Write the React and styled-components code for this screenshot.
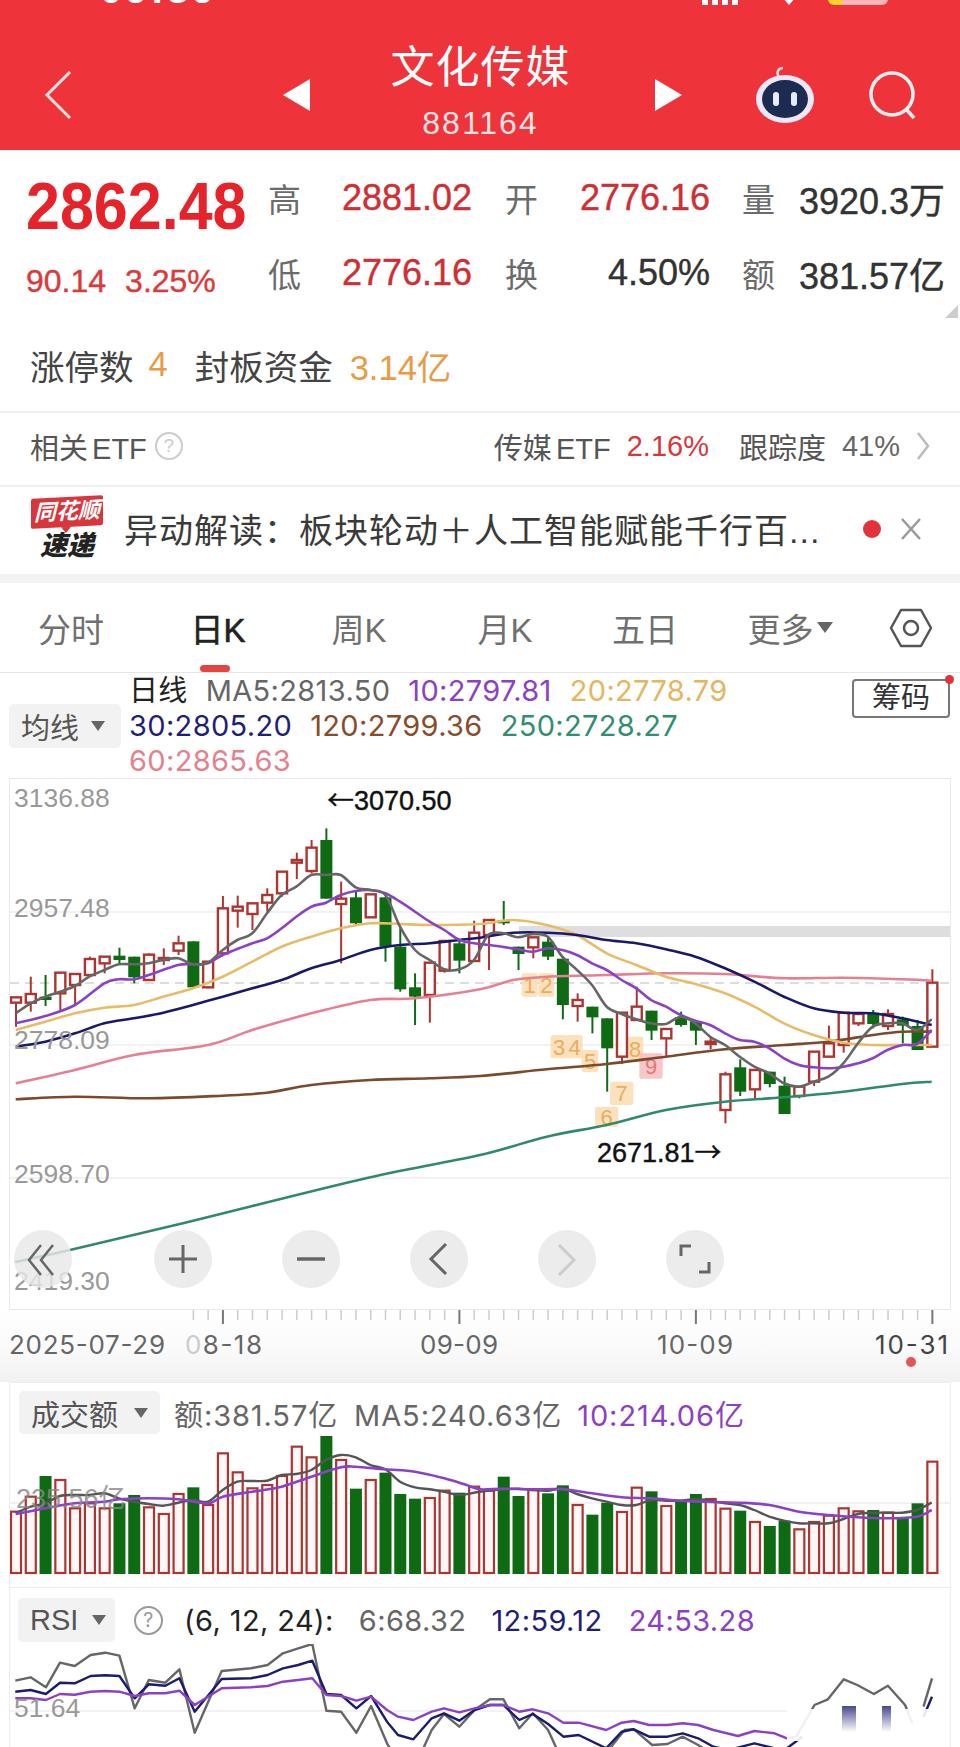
import styled, { createGlobalStyle } from 'styled-components';

const FONT = '"Liberation Sans", "Noto Sans CJK SC", sans-serif';
const UI_FONT = 'Inter, "Noto Sans CJK SC", sans-serif';

const GlobalStyle = createGlobalStyle`
  html, body { margin: 0; padding: 0; background: #fff; }
  body { font-family: ${FONT}; }
`;

const GREEN = '#0f6a14';
const CANDLE_RED = '#ad3430';

// coordinates were read off zoomed crops, so convert them back to page pixels
const z3 = ([u, v]) => [u / 3, 780 + v / 3];
const z4 = ([u, v]) => [480 + u / 3, 860 + v / 3];
const z8 = ([u, v]) => [u / 1.633, 1570 + v / 3];
const vol3 = ([u, v]) => [u / 3, 1370 + v / 3];
const vol4 = ([u, v]) => [480 + u / 3, 1370 + v / 3];
const candleX = (i) => 16 + i * 14.78;

const smooth = (pts) => {
  let d = `M${pts[0][0].toFixed(1)} ${pts[0][1].toFixed(1)}`;
  for (let i = 0; i < pts.length - 1; i++) {
    const p0 = pts[i - 1] || pts[i];
    const p1 = pts[i];
    const p2 = pts[i + 1];
    const p3 = pts[i + 2] || p2;
    const c1 = [p1[0] + (p2[0] - p0[0]) / 6, p1[1] + (p2[1] - p0[1]) / 6];
    const c2 = [p2[0] - (p3[0] - p1[0]) / 6, p2[1] - (p3[1] - p1[1]) / 6];
    d += `C${c1[0].toFixed(1)} ${c1[1].toFixed(1)} ${c2[0].toFixed(1)} ${c2[1].toFixed(1)} ${p2[0].toFixed(1)} ${p2[1].toFixed(1)}`;
  }
  return d;
};
const poly = (pts) => pts.map((p) => `${p[0].toFixed(1)},${p[1].toFixed(1)}`).join(' ');

// [colour, bodyTop, bodyBottom, wickTop, wickBottom]
const leftCandles = [
  ['r', 652, 668, 652, 740], ['r', 642, 668, 590, 695], ['g', 650, 660, 585, 678], ['r', 578, 640, 578, 690],
  ['r', 582, 615, 582, 672], ['r', 537, 585, 530, 585], ['r', 530, 550, 530, 580], ['g', 527, 540, 503, 550],
  ['g', 530, 592, 530, 610], ['r', 524, 600, 520, 600], ['r', 534, 540, 505, 555], ['r', 490, 512, 467, 525],
  ['g', 484, 622, 484, 622], ['r', 545, 622, 545, 625], ['r', 385, 520, 348, 525], ['r', 380, 392, 347, 443],
  ['r', 370, 402, 370, 450], ['r', 345, 368, 325, 395], ['r', 275, 340, 275, 350], ['r', 240, 248, 218, 297],
  ['r', 203, 273, 180, 280], ['g', 180, 356, 145, 356], ['r', 356, 372, 305, 550], ['g', 352, 430, 335, 435],
  ['r', 343, 412, 343, 412], ['g', 352, 500, 350, 545], ['g', 500, 628, 440, 635], ['g', 622, 650, 580, 735],
  ['r', 548, 645, 548, 728], ['r', 483, 572, 483, 578], ['g', 490, 542, 480, 580], ['r', 458, 543, 422, 543],
];
const rightCandles = [
  ['r', 180, 225, 180, 330], ['g', 180, 190, 123, 195], ['g', 260, 282, 260, 330], ['r', 232, 262, 232, 295],
  ['g', 245, 290, 230, 300], ['g', 296, 435, 296, 478], ['r', 420, 438, 400, 485], ['g', 440, 472, 440, 520],
  ['g', 475, 565, 475, 695], ['r', 458, 590, 458, 612], ['r', 440, 480, 380, 480], ['g', 452, 512, 452, 540],
  ['r', 507, 535, 507, 590], ['g', 472, 495, 455, 500], ['g', 485, 512, 480, 555], ['r', 545, 552, 530, 568],
  ['r', 643, 750, 635, 790], ['g', 622, 695, 598, 708], ['r', 630, 688, 630, 715], ['g', 635, 672, 635, 682],
  ['g', 677, 762, 650, 762], ['r', 680, 708, 680, 715], ['r', 575, 665, 575, 678], ['r', 550, 590, 497, 590],
  ['r', 458, 555, 458, 578], ['r', 462, 490, 458, 498], ['g', 462, 492, 450, 505], ['r', 462, 498, 448, 510],
  ['g', 478, 497, 470, 550], ['g', 498, 570, 480, 570], ['r', 368, 560, 328, 560],
];
const candles = [
  ...leftCandles.map(([c, a, b, t, l]) => ({ c, top: 780 + a / 3, bottom: 780 + b / 3, hi: 780 + t / 3, lo: 780 + l / 3 })),
  ...rightCandles.map(([c, a, b, t, l]) => ({ c, top: 860 + a / 3, bottom: 860 + b / 3, hi: 860 + t / 3, lo: 860 + l / 3 })),
];

const maLines = [
  {
    color: '#e87f90',
    pts: [
      ...[[47, 910], [225, 870], [402, 825], [624, 795], [757, 750], [934, 700], [1111, 660], [1245, 655], [1440, 628]].map(z3),
      ...[[100, 360], [203, 350], [380, 345], [558, 340], [735, 342], [912, 355], [1090, 353], [1267, 358], [1355, 362]].map(z4),
    ],
  },
  {
    color: '#7b4a2c',
    pts: [
      ...[[47, 958], [225, 950], [446, 955], [668, 947], [801, 938], [934, 915], [1111, 900], [1289, 895], [1440, 888]].map(z3),
      ...[[200, 628], [380, 612], [558, 590], [735, 568], [912, 555], [1045, 545], [1178, 525], [1267, 515], [1355, 515]].map(z4),
    ],
  },
  {
    color: '#2f8a6c',
    pts: [
      [15, 1262], [70, 1250], [184, 1223], [367, 1178], [480, 1155],
      ...[[200, 830], [380, 795], [558, 750], [735, 725], [912, 712], [1090, 695], [1267, 672], [1355, 665]].map(z4),
    ],
  },
  {
    color: '#e9bb66',
    pts: [
      ...[[47, 750], [136, 725], [225, 700], [313, 683], [402, 675], [490, 650], [579, 625], [668, 590], [757, 545], [845, 500], [934, 470], [1022, 445], [1111, 430], [1200, 432], [1289, 435], [1440, 432]].map(z3),
      ...[[100, 180], [200, 195], [290, 225], [380, 280], [469, 315], [558, 350], [646, 372], [735, 400], [823, 440], [912, 490], [1001, 525], [1090, 548], [1178, 555], [1267, 555], [1355, 555]].map(z4),
    ],
  },
  {
    color: '#19196b',
    pts: [
      ...[[47, 800], [136, 785], [225, 760], [313, 730], [402, 715], [490, 698], [579, 675], [668, 650], [757, 625], [845, 600], [934, 565], [1022, 540], [1111, 510], [1200, 495], [1289, 490], [1378, 480], [1440, 473]].map(z3),
      ...[[100, 218], [203, 218], [291, 225], [380, 240], [469, 250], [558, 268], [646, 290], [735, 325], [823, 365], [912, 410], [1001, 445], [1090, 458], [1178, 460], [1267, 475], [1355, 495]].map(z4),
    ],
  },
  {
    color: '#8b41c6',
    pts: [
      ...[[47, 730], [136, 708], [225, 675], [313, 610], [357, 598], [402, 598], [446, 585], [535, 555], [579, 553], [624, 550], [668, 525], [757, 490], [801, 475], [845, 445], [889, 410], [934, 380], [978, 368], [1022, 345], [1067, 333], [1111, 330], [1156, 340], [1200, 365], [1245, 395], [1289, 425], [1333, 450], [1378, 480], [1422, 490]].map(z3),
      ...[[50, 258], [114, 268], [158, 275], [203, 265], [247, 270], [291, 285], [336, 310], [380, 330], [425, 360], [469, 385], [513, 420], [558, 440], [602, 465], [646, 482], [690, 495], [735, 520], [779, 540], [823, 545], [868, 565], [912, 595], [957, 615], [1001, 622], [1045, 625], [1090, 620], [1134, 610], [1178, 595], [1222, 570], [1267, 555], [1311, 552], [1355, 510]].map(z4),
    ],
  },
  {
    color: '#666',
    pts: [
      ...[[47, 700], [92, 670], [136, 650], [180, 635], [225, 618], [268, 590], [313, 570], [357, 553], [402, 553], [446, 550], [490, 540], [535, 535], [579, 553], [624, 548], [668, 510], [712, 480], [757, 460], [801, 400], [845, 345], [889, 320], [934, 285], [978, 285], [1022, 285], [1067, 322], [1111, 330], [1156, 345], [1200, 440], [1245, 510], [1289, 540], [1333, 568], [1378, 568], [1422, 540]].map(z3),
      ...[[25, 225], [70, 220], [114, 232], [158, 222], [203, 230], [247, 290], [291, 330], [336, 375], [380, 440], [425, 462], [469, 478], [513, 490], [558, 492], [602, 470], [646, 490], [690, 530], [735, 555], [779, 590], [823, 620], [868, 640], [912, 670], [957, 680], [1001, 665], [1045, 650], [1090, 610], [1134, 550], [1178, 500], [1222, 490], [1267, 490], [1311, 510], [1355, 478]].map(z4),
    ],
  },
];

const marks = [
  { n: 1, x: 125, y: 340, w: 48, h: 70 }, { n: 2, x: 175, y: 340, w: 48, h: 70 },
  { n: 3, x: 212, y: 525, w: 50, h: 70 }, { n: 4, x: 260, y: 525, w: 48, h: 70 },
  { n: 5, x: 305, y: 570, w: 50, h: 66 }, { n: 8, x: 440, y: 530, w: 50, h: 76 },
  { n: 9, x: 478, y: 580, w: 70, h: 76, pink: true }, { n: 7, x: 390, y: 665, w: 70, h: 70 },
  { n: 6, x: 345, y: 740, w: 70, h: 60 },
];

const volTops = [
  425, 380, 318, 330, 415, 400, 415, 400, 375, 412, 432, 372, 352, 405, 250, 307, 355, 345, 318, 230, 262, 197, 270, 356, 330, 308, 372, 386, 384, 362, 368, 350,
  362, 320, 378, 360, 370, 346, 405, 434, 398, 426, 353, 364, 408, 390, 372, 387, 416, 422, 456, 468, 452, 478, 456, 437, 415, 424, 420, 428, 445, 400, 275,
];

const volGray = [
  ...[[47, 430], [92, 410], [136, 400], [180, 378], [224, 375], [268, 375], [313, 370], [357, 385], [402, 395], [446, 402], [490, 407], [535, 398], [579, 390], [624, 395], [668, 360], [712, 335], [757, 333], [801, 332], [845, 315], [889, 312], [934, 300], [978, 270], [1022, 255], [1067, 262], [1111, 285], [1156, 298], [1200, 335], [1245, 352], [1289, 358], [1333, 365], [1378, 375]].map(vol3),
  ...[[0, 365], [70, 358], [114, 356], [158, 360], [203, 362], [247, 355], [291, 372], [336, 385], [380, 395], [425, 405], [469, 405], [513, 390], [558, 392], [602, 392], [646, 388], [690, 392], [735, 400], [779, 405], [823, 420], [868, 440], [912, 452], [957, 460], [1001, 460], [1045, 460], [1090, 447], [1134, 432], [1178, 428], [1222, 428], [1267, 428], [1311, 420], [1355, 398]].map(vol4),
];
const volPurple = [
  ...[[47, 432], [136, 415], [224, 400], [313, 395], [357, 388], [446, 385], [535, 388], [624, 400], [668, 380], [757, 365], [845, 350], [934, 320], [1022, 292], [1067, 290], [1156, 298], [1245, 305], [1333, 325], [1400, 345]].map(vol3),
  ...[[0, 358], [70, 356], [158, 358], [247, 358], [336, 370], [425, 382], [513, 385], [602, 392], [690, 396], [779, 398], [868, 405], [957, 425], [1045, 435], [1134, 442], [1222, 445], [1311, 440], [1355, 420]].map(vol4),
];

const rsiLines = [
  {
    color: '#666',
    segs: [
      [[25, 332], [50, 322], [75, 352], [98, 278], [122, 288], [148, 255], [172, 248], [195, 257], [220, 415], [243, 330], [270, 338], [293, 298], [318, 488], [362, 303], [410, 295], [437, 285], [462, 250], [487, 235], [510, 222], [533, 422], [557, 425], [582, 488], [606, 408], [632, 520], [645, 560], [685, 560], [705, 480], [725, 432], [750, 470], [775, 420], [800, 388], [822, 388], [848, 475], [870, 430], [895, 480], [915, 560], [985, 560], [1020, 480], [1035, 478], [1065, 525], [1090, 522], [1115, 500], [1140, 525], [1170, 560]],
      [[1300, 500], [1330, 405], [1352, 388], [1378, 328], [1400, 345], [1427, 372], [1450, 347], [1478, 405], [1490, 460]],
      [[1508, 410], [1522, 325]],
    ],
  },
  {
    color: '#1b1b70',
    segs: [
      [[25, 365], [50, 360], [75, 372], [98, 338], [122, 340], [148, 318], [172, 316], [195, 318], [220, 385], [243, 343], [270, 347], [293, 325], [318, 425], [362, 327], [410, 325], [437, 315], [462, 295], [487, 285], [510, 272], [533, 372], [557, 375], [582, 415], [606, 378], [632, 455], [650, 495], [675, 508], [705, 445], [725, 430], [750, 452], [775, 420], [800, 405], [822, 405], [848, 450], [870, 432], [895, 462], [920, 500], [945, 495], [990, 535], [1015, 485], [1035, 478], [1060, 500], [1090, 500], [1115, 490], [1140, 505], [1165, 530], [1190, 540], [1232, 520], [1265, 535], [1285, 535], [1310, 500]],
      [[1508, 440], [1522, 380]],
    ],
  },
  {
    color: '#8b41c6',
    segs: [
      [[25, 385], [50, 385], [75, 390], [98, 372], [122, 374], [148, 365], [172, 363], [195, 365], [220, 378], [243, 370], [270, 370], [293, 362], [318, 405], [362, 355], [410, 352], [437, 348], [462, 335], [487, 330], [510, 325], [533, 375], [557, 378], [582, 392], [606, 380], [632, 420], [650, 440], [675, 450], [705, 425], [725, 415], [750, 427], [775, 415], [800, 405], [822, 405], [848, 425], [870, 418], [895, 430], [920, 458], [945, 458], [990, 480], [1015, 458], [1035, 453], [1060, 465], [1090, 465], [1115, 460], [1140, 465], [1165, 480], [1205, 498], [1232, 483], [1265, 490], [1285, 505], [1300, 500]],
    ],
  },
];

const dateLabels = [
  { x: 9, w: 156, text: '2025-07-29' },
  { x: 420, w: 78, text: '09-09' },
  { x: 657, w: 76, text: '10-09' },
  { x: 875, w: 73, text: '10-31', dark: true },
];

const Page = styled.div`
  width: 960px;
  height: 1747px;
  overflow: hidden;
  background: #fff;
  color: #333;
  font-family: ${FONT};
`;

const Header = styled.header`
  position: relative;
  height: 150px;
  background: #ee333a;
  color: #fff;
  display: grid;
  grid-template-columns: 283px 399px 278px;
  box-sizing: border-box;
  padding-top: 40px;
  overflow: hidden;
`;

const StatusBar = styled.div`
  position: absolute;
  left: 100px;
  right: 72px;
  top: -26px;
  height: 31px;
  display: flex;
  align-items: flex-end;
  justify-content: space-between;
  font-size: 40px;
  font-weight: 700;
  letter-spacing: 3px;
  line-height: 31px;
`;

const StatusIcons = styled.div`
  display: flex;
  align-items: flex-end;
  gap: 32px;
`;

const SignalBars = styled.span`
  display: block;
  width: 38px;
  height: 10px;
  margin-right: 10px;
  background: repeating-linear-gradient(90deg, #fff 0 6px, transparent 6px 10px);
`;

const WifiTip = styled.span`
  display: block;
  width: 0;
  height: 0;
  border-left: 7px solid transparent;
  border-right: 7px solid transparent;
  border-top: 8px solid #fff;
`;

const Battery = styled.span`
  display: block;
  width: 60px;
  height: 6px;
  border-radius: 0 0 7px 7px;
  background: linear-gradient(90deg, #f6d22c 0 14px, #f8b6b8 14px);
`;

const HeaderLeft = styled.div`
  display: flex;
  align-items: center;
  padding-left: 44px;
`;

const HeaderCenter = styled.div`
  display: flex;
  align-items: center;
  justify-content: space-between;
`;

const TitleBlock = styled.div`
  display: flex;
  flex-direction: column;
  align-items: center;
  align-self: flex-start;
  margin-right: 4px;
`;

const Title = styled.div`
  font-size: 44px;
  line-height: 56px;
  letter-spacing: 1px;
`;

const Code = styled.div`
  margin-top: 8px;
  font-size: 32px;
  line-height: 38px;
  color: #fbe3e4;
  letter-spacing: 2px;
`;

const HeaderRight = styled.div`
  display: flex;
  align-items: center;
  justify-content: flex-end;
  gap: 52px;
  padding-right: 42px;
`;

const QuoteRow = styled.section`
  position: relative;
  display: flex;
  height: 160px;
  box-sizing: border-box;
  padding-top: 10px;
`;

const PriceBlock = styled.div`
  width: 268px;
  box-sizing: border-box;
  padding: 16px 0 0 26px;
`;

const Price = styled.div`
  font-size: 61px;
  line-height: 61px;
  font-weight: 700;
  white-space: nowrap;
  color: #e6232a;
  transform: scaleY(1.1);
`;

const PriceChange = styled.div`
  margin-top: 28px;
  display: flex;
  gap: 19px;
  font-size: 32px;
  line-height: 32px;
  color: #dc3a3a;
  -webkit-text-stroke: 0.4px #dc3a3a;
`;

const QuoteGrid = styled.div`
  display: grid;
  grid-template-columns: 74px 130px 108px 130px 88px 147px;
  grid-auto-rows: 75px;
  align-items: center;
`;

const QuoteLabel = styled.span`
  padding-left: ${(p) => p.$pad || 0}px;
  font-size: 33px;
  color: #6b6b6b;
`;

const QuoteValue = styled.span`
  text-align: right;
  font-size: 36px;
  white-space: nowrap;
  color: ${(p) => (p.$red ? '#cf2f34' : '#333')};
  -webkit-text-stroke: 0.4px ${(p) => (p.$red ? '#cf2f34' : '#333')};
`;

const Corner = styled.span`
  position: absolute;
  right: 2px;
  bottom: -8px;
  width: 13px;
  height: 13px;
  background: #ccc;
  clip-path: polygon(100% 0, 100% 100%, 0 100%);
`;

const LimitRow = styled.div`
  height: 101px;
  box-sizing: border-box;
  padding: 8px 0 0 30px;
  display: flex;
  align-items: center;
  font-size: 34.5px;
  color: #444;
`;

const Orange = styled.span`
  color: #e99a45;
  margin: ${(p) => p.$margin};
`;

const EtfRow = styled.div`
  height: 74px;
  box-sizing: border-box;
  border-top: 2px solid #f0f0f0;
  padding: 0 30px 6px;
  display: flex;
  align-items: center;
  font-size: 29px;
  word-spacing: -4px;
  color: #555;
`;

const EtfValue = styled.span`
  margin-left: ${(p) => p.$gap}px;
  color: ${(p) => p.$color || '#555'};
`;

const Question = styled.span`
  margin-left: ${(p) => p.$gap}px;
  width: ${(p) => p.$size}px;
  height: ${(p) => p.$size}px;
  flex: none;
  box-sizing: border-box;
  border: 2px solid ${(p) => p.$color || '#ccc'};
  border-radius: 50%;
  color: ${(p) => p.$color || '#ccc'};
  display: inline-flex;
  align-items: center;
  justify-content: center;
  font-size: ${(p) => p.$size * 0.68}px;
`;

const Push = styled.span`
  margin-left: auto;
`;

const NewsRow = styled.div`
  height: 89px;
  box-sizing: border-box;
  border-top: 2px solid #f0f0f0;
  padding: 0 0 4px 30px;
  display: flex;
  align-items: center;
`;

const Logo = styled.div`
  width: 74px;
  margin-right: 20px;
  display: flex;
  flex-direction: column;
  align-items: center;
`;

const LogoBanner = styled.div`
  position: relative;
  width: 72px;
  height: 30px;
  background: #d8363b;
  border-radius: 2px;
  color: #fff;
  font-size: 22px;
  line-height: 30px;
  font-weight: 700;
  font-style: italic;
  text-align: center;
  white-space: nowrap;
  transform: skewY(-3deg);
  &::after {
    content: '';
    position: absolute;
    left: 30px;
    bottom: -6px;
    border-left: 5px solid transparent;
    border-right: 5px solid transparent;
    border-top: 6px solid #d8363b;
  }
`;

const LogoText = styled.div`
  margin-top: 6px;
  font-size: 27px;
  line-height: 27px;
  font-weight: 900;
  font-style: italic;
  color: #222;
`;

const NewsText = styled.div`
  flex: 1;
  font-size: 34px;
  letter-spacing: 1px;
  color: #3a3a3a;
  white-space: nowrap;
`;

const NewsDot = styled.span`
  width: 18px;
  height: 18px;
  margin-right: 18px;
  border-radius: 50%;
  background: #e2333a;
`;

const Band = styled.div`
  height: 9px;
  background: #f2f2f2;
`;

const Tabs = styled.nav`
  height: 89px;
  display: grid;
  grid-template-columns: 142px 152px 130px 162px 118px 172px 70px;
  grid-template-rows: 89px;
  align-items: center;
  justify-items: center;
  font-size: 33px;
  color: #707070;
`;

const Tab = styled.span`
  position: relative;
  display: inline-flex;
  align-items: center;
  height: 100%;
  color: ${(p) => (p.$active ? '#222' : '#707070')};
  ${(p) => p.$active && '-webkit-text-stroke: 0.6px #222;'}
  ${(p) =>
    p.$active &&
    `&::after {
      content: '';
      position: absolute;
      left: 10px;
      bottom: 0;
      width: 30px;
      height: 7px;
      border-radius: 4px;
      background: #e4443f;
    }`}
`;

const TabCaret = styled.i`
  margin-left: 3px;
  border-left: 8px solid transparent;
  border-right: 8px solid transparent;
  border-top: 11px solid #666;
`;

const LegendRow = styled.section`
  height: 106px;
  box-sizing: border-box;
  border-top: 1px solid #e6e6e6;
  padding: 0 10px 0 9px;
  display: flex;
  align-items: center;
`;

const Dropdown = styled.div`
  width: ${(p) => p.$w}px;
  height: ${(p) => p.$h || 44}px;
  flex: none;
  box-sizing: border-box;
  background: #f2f2f2;
  border-radius: 5px;
  padding-left: ${(p) => p.$pad}px;
  display: flex;
  align-items: center;
  gap: ${(p) => p.$gap}px;
  font-family: ${FONT};
  font-size: 29px;
  letter-spacing: 0;
  color: #555;
`;

const Caret = styled.i`
  border-left: 7px solid transparent;
  border-right: 7px solid transparent;
  border-top: 10px solid #666;
`;

const LegendText = styled.div`
  margin-left: 8px;
  display: flex;
  flex-direction: column;
  font-family: ${UI_FONT};
  font-size: 29px;
  letter-spacing: 0.35px;
  line-height: 35px;
  white-space: nowrap;
`;

const LegendLine = styled.div`
  display: flex;
  gap: 18px;
`;

const MaValue = styled.span`
  color: ${(p) => p.$color};
`;

const ChipButton = styled.div`
  position: relative;
  margin-left: auto;
  align-self: flex-start;
  margin-top: 6px;
  width: 98px;
  height: 39px;
  box-sizing: border-box;
  border: 2px solid #777;
  border-radius: 4px;
  font-size: 29px;
  line-height: 35px;
  text-align: center;
  color: #333;
  &::after {
    content: '';
    position: absolute;
    right: -6px;
    top: -6px;
    width: 9px;
    height: 9px;
    border-radius: 50%;
    background: #e2333a;
  }
`;

const ChartPanel = styled.section`
  position: relative;
  margin-left: 9px;
  width: 942px;
  height: 532px;
  box-sizing: border-box;
  border: 1px solid #e9e9e9;
`;

const PlotSvg = styled.svg`
  display: block;
  font-family: ${FONT};
`;

const AxisSvg = styled(PlotSvg)`
  font-family: ${UI_FONT};
`;

const Controls = styled.div`
  position: absolute;
  left: 4px;
  top: 451px;
  display: flex;
  gap: 70px;
`;

const RoundButton = styled.div`
  width: 58px;
  height: 58px;
  border-radius: 50%;
  background: rgba(232, 232, 232, 0.82);
  &:first-child {
    margin-right: 12px;
  }
`;

const AxisRow = styled.div`
  height: 72px;
  background: linear-gradient(180deg, #fff 0%, #fafafa 55%, #f1f1f1 100%);
`;

const SubPanel = styled.section`
  margin-left: 9px;
  width: 942px;
  box-sizing: border-box;
  border: 1px solid #ececec;
  border-bottom: none;
  background: #fff;
  padding-top: ${(p) => p.$top}px;
`;

const SubHeader = styled.div`
  height: ${(p) => p.$h}px;
  margin-bottom: 2px;
  padding-left: ${(p) => p.$pad}px;
  display: flex;
  align-items: center;
  font-family: ${UI_FONT};
  font-size: 29px;
  letter-spacing: ${(p) => p.$spacing}px;
  white-space: nowrap;
  color: #666;
`;

const SubValue = styled.span`
  margin-left: ${(p) => p.$gap}px;
  color: ${(p) => p.$color || '#666'};
`;

const iconStroke = { fill: 'none', stroke: '#666', strokeWidth: 3 };

const controlIcons = [
  <g key="a" {...iconStroke}><path d="M27 15 15 30l12 15M39 15 27 30l12 15" strokeWidth="2.5" /></g>,
  <g key="b" {...iconStroke}><path d="M15 29h28M29 15v28" /></g>,
  <g key="c" {...iconStroke}><path d="M15 29h28" strokeWidth="3.5" /></g>,
  <g key="d" {...iconStroke}><path d="M37 15 22 30l15 15" transform="translate(-1 -1)" /></g>,
  <g key="e" {...iconStroke}><path d="M21 15l15 15-15 15" stroke="#ccc" /></g>,
  <g key="f" {...iconStroke}><path d="M15 26V16h10M43 32v10H33" /></g>,
];

const RobotIcon = () => (
  <svg width="62" height="60" viewBox="0 0 62 60">
    <path d="M25 12c-3-4-1-9 4-9" fill="none" stroke="#f8d9e4" strokeWidth="2.5" />
    <ellipse cx="31" cy="34" rx="29" ry="24" fill="#efe8fb" />
    <ellipse cx="31" cy="34" rx="23" ry="19" fill="#1d2a52" />
    <rect x="19" y="27" width="6" height="14" rx="3" fill="#e6ecff" />
    <rect x="37" y="27" width="6" height="14" rx="3" fill="#e6ecff" />
  </svg>
);

const App = () => {
  const gridY = [912, 1045, 1178];
  const yLabels = [['3136.88', 797], ['2957.48', 907], ['2778.09', 1039], ['2598.70', 1173], ['2419.30', 1280]];

  return (
    <Page>
      <GlobalStyle />
      <Header>
        <StatusBar>
          <span>09:39</span>
          <StatusIcons>
            <SignalBars />
            <WifiTip />
            <Battery />
          </StatusIcons>
        </StatusBar>
        <HeaderLeft>
          <svg width="28" height="50" viewBox="0 0 28 50">
            <path d="M26 2 3 25l23 23" fill="none" stroke="#fbe3e4" strokeWidth="3" />
          </svg>
        </HeaderLeft>
        <HeaderCenter>
          <svg width="28" height="32" viewBox="0 0 28 32"><path d="M27 0v32L0 16z" fill="#fff" /></svg>
          <TitleBlock>
            <Title>文化传媒</Title>
            <Code>881164</Code>
          </TitleBlock>
          <svg width="28" height="32" viewBox="0 0 28 32"><path d="M1 0v32l27-16z" fill="#fff" /></svg>
        </HeaderCenter>
        <HeaderRight>
          <RobotIcon />
          <svg width="50" height="50" viewBox="0 0 50 50">
            <circle cx="24" cy="24" r="21" fill="none" stroke="#fdf0f0" strokeWidth="3.5" />
            <path d="M38 39l8 9" stroke="#fdf0f0" strokeWidth="3.5" />
          </svg>
        </HeaderRight>
      </Header>

      <QuoteRow>
        <PriceBlock>
          <Price>2862.48</Price>
          <PriceChange>
            <span>90.14</span>
            <span>3.25%</span>
          </PriceChange>
        </PriceBlock>
        <QuoteGrid>
          <QuoteLabel>高</QuoteLabel>
          <QuoteValue $red>2881.02</QuoteValue>
          <QuoteLabel $pad={33}>开</QuoteLabel>
          <QuoteValue $red>2776.16</QuoteValue>
          <QuoteLabel $pad={32}>量</QuoteLabel>
          <QuoteValue>3920.3万</QuoteValue>
          <QuoteLabel>低</QuoteLabel>
          <QuoteValue $red>2776.16</QuoteValue>
          <QuoteLabel $pad={33}>换</QuoteLabel>
          <QuoteValue>4.50%</QuoteValue>
          <QuoteLabel $pad={32}>额</QuoteLabel>
          <QuoteValue>381.57亿</QuoteValue>
        </QuoteGrid>
        <Corner />
      </QuoteRow>

      <LimitRow>
        涨停数
        <Orange $margin="0 27px 0 15px">4</Orange>
        封板资金
        <Orange $margin="0 0 0 17px">3.14亿</Orange>
      </LimitRow>

      <EtfRow>
        相关 ETF
        <Question $gap={8} $size={28}>?</Question>
        <Push />
        传媒 ETF
        <EtfValue $gap={16} $color="#d9363c">2.16%</EtfValue>
        <EtfValue $gap={30}>跟踪度</EtfValue>
        <EtfValue $gap={16} $color="#666">41%</EtfValue>
        <svg width="14" height="30" viewBox="0 0 14 30" style={{ marginLeft: 16 }}>
          <path d="M2 2l10 13L2 28" fill="none" stroke="#bbb" strokeWidth="2.5" />
        </svg>
      </EtfRow>

      <NewsRow>
        <Logo>
          <LogoBanner>同花顺</LogoBanner>
          <LogoText>速递</LogoText>
        </Logo>
        <NewsText>异动解读：板块轮动＋人工智能赋能千行百...</NewsText>
        <NewsDot />
        <svg width="24" height="24" viewBox="0 0 24 24" style={{ marginRight: 37 }}>
          <path d="M3 2l18 20M21 2 3 22" stroke="#999" strokeWidth="2.5" />
        </svg>
      </NewsRow>
      <Band />

      <Tabs>
        <Tab>分时</Tab>
        <Tab $active>日K</Tab>
        <Tab>周K</Tab>
        <Tab>月K</Tab>
        <Tab>五日</Tab>
        <Tab>更多<TabCaret /></Tab>
        <svg width="44" height="42" viewBox="0 0 44 42">
          <path d="M12 3h20l10 18-10 18H12L2 21z" fill="none" stroke="#555" strokeWidth="2.5" strokeLinejoin="round" />
          <circle cx="22" cy="21" r="7" fill="none" stroke="#555" strokeWidth="2.5" />
        </svg>
      </Tabs>

      <LegendRow>
        <Dropdown $w={112} $pad={12} $gap={12}>均线<Caret /></Dropdown>
        <LegendText>
          <LegendLine>
            <MaValue $color="#222">日线</MaValue>
            <MaValue $color="#666">MA5:2813.50</MaValue>
            <MaValue $color="#8b41c6">10:2797.81</MaValue>
            <MaValue $color="#e5b560">20:2778.79</MaValue>
          </LegendLine>
          <LegendLine>
            <MaValue $color="#1f1f7a">30:2805.20</MaValue>
            <MaValue $color="#8a4b2a">120:2799.36</MaValue>
            <MaValue $color="#2f8f70">250:2728.27</MaValue>
          </LegendLine>
          <LegendLine>
            <MaValue $color="#e5808f">60:2865.63</MaValue>
          </LegendLine>
        </LegendText>
        <ChipButton>筹码</ChipButton>
      </LegendRow>

      <ChartPanel>
        <PlotSvg width="940" height="530" viewBox="10 779 940 530">
          {gridY.map((y) => (
            <line key={y} x1="10" x2="950" y1={y} y2={y} stroke="#eee" strokeWidth="1.5" />
          ))}
          <rect x="519" y="926" width="431" height="11" fill="#dedede" />
          <line x1="10" x2="950" y1="983" y2="983" stroke="#bbb" strokeWidth="1" strokeDasharray="9 6" />

          {marks.map((m) => (
            <g key={m.n}>
              <rect x={480 + m.x / 3} y={860 + m.y / 3} width={m.w / 3} height={m.h / 3} rx="2" fill={m.pink ? '#f7bcbc' : '#fbdcb4'} opacity="0.85" />
              <text x={480 + (m.x + m.w / 2) / 3} y={860 + (m.y + m.h / 2) / 3 + 8} textAnchor="middle" fontSize="22" fill={m.pink ? '#e4787c' : '#e9ae5a'}>{m.n}</text>
            </g>
          ))}

          {candles.map((k, i) => {
            const x = candleX(i);
            const color = k.c === 'r' ? CANDLE_RED : GREEN;
            return (
              <g key={i}>
                <line x1={x} x2={x} y1={k.hi} y2={k.lo} stroke={color} strokeWidth="2" />
                {k.c === 'r'
                  ? <rect x={x - 5} y={k.top} width="10" height={k.bottom - k.top} fill="#fff" stroke={color} strokeWidth="2.4" />
                  : <rect x={x - 6} y={k.top} width="12" height={k.bottom - k.top} fill={color} />}
              </g>
            );
          })}

          {maLines.map((l) => (
            <path key={l.color} d={smooth(l.pts)} fill="none" stroke={l.color} strokeWidth="2.6" />
          ))}

          {yLabels.map(([t, y]) => (
            <text key={t} x="14" y={y + 10} fontSize="26.5" fill="#999">{t}</text>
          ))}
          <text x="327" y="810" fontSize="27" fill="#111" stroke="#111" strokeWidth="0.4">
            <tspan fontFamily="Noto Sans CJK SC">←</tspan>3070.50
          </text>
          <text x="597" y="1162" fontSize="27" fill="#111" stroke="#111" strokeWidth="0.4">
            2671.81<tspan fontFamily="Noto Sans CJK SC">→</tspan>
          </text>
        </PlotSvg>
        <Controls>
          {controlIcons.map((icon, i) => (
            <RoundButton key={i}>
              <svg width="58" height="58" viewBox="0 0 58 58">{icon}</svg>
            </RoundButton>
          ))}
        </Controls>
      </ChartPanel>

      <AxisRow>
        <AxisSvg width="960" height="72" viewBox="0 1310 960 72">
          {Array.from({ length: 51 }, (_, n) => {
            const i = n + 12;
            const major = i === 14 || i === 30 || i === 46 || i === 62;
            return (
              <line key={i} x1={candleX(i)} x2={candleX(i)} y1="1310" y2={major ? 1324 : 1320} stroke={major ? '#777' : '#ccc'} strokeWidth={major ? 2 : 1.5} />
            );
          })}
          {dateLabels.map((d) => (
            <text key={d.text} x={d.x} y="1354" fontSize="26" textLength={d.w} fill={d.dark ? '#444' : '#666'}>{d.text}</text>
          ))}
          <text x="185" y="1354" fontSize="26" textLength="77" fill="#666"><tspan fill="#ccc">0</tspan>8-18</text>
          <circle cx="911" cy="1362" r="5" fill="#e2565a" />
        </AxisSvg>
      </AxisRow>

      <SubPanel $top={8}>
        <SubHeader $h={43} $pad={9} $spacing={0.9}>
          <Dropdown $w={141} $h={43} $pad={12} $gap={16}>成交额<Caret /></Dropdown>
          <SubValue $gap={14}>额:381.57亿</SubValue>
          <SubValue $gap={16}>MA5:240.63亿</SubValue>
          <SubValue $gap={15} $color="#8b41c6">10:214.06亿</SubValue>
        </SubHeader>
        <PlotSvg width="940" height="151" viewBox="10 1436 940 151">
          <line x1="10" x2="950" y1="1503" y2="1503" stroke="#eee" strokeWidth="1.5" />
          {volTops.map((v, i) => {
            const x = candleX(i);
            const top = 1370 + v / 3;
            const isRed = candles[i].c === 'r';
            return isRed
              ? <rect key={i} x={x - 5} y={top} width="10" height={1573 - top} fill="#fff8f6" stroke={CANDLE_RED} strokeWidth="2.2" />
              : <rect key={i} x={x - 6} y={top} width="12" height={1574 - top} fill={GREEN} />;
          })}
          <path d={smooth(volGray)} fill="none" stroke="#555" strokeWidth="2.4" />
          <path d={smooth(volPurple)} fill="none" stroke="#8b41c6" strokeWidth="2.6" />
          <text x="16" y="1508" fontSize="27" fill="#888" opacity="0.8">235.56亿</text>
        </PlotSvg>
      </SubPanel>

      <SubPanel $top={10}>
        <SubHeader $h={44} $pad={8} $spacing={0.4}>
          <Dropdown $w={97} $h={44} $pad={12} $gap={14}>RSI<Caret /></Dropdown>
          <Question $gap={19} $size={29} $color="#999">?</Question>
          <SubValue $gap={21} $color="#222">(6, 12, 24):</SubValue>
          <SubValue $gap={25}>6:68.32</SubValue>
          <SubValue $gap={25} $color="#1f1f7a">12:59.12</SubValue>
          <SubValue $gap={26} $color="#8b41c6">24:53.28</SubValue>
        </SubHeader>
        <PlotSvg width="940" height="103" viewBox="10 1644 940 103">
          <defs>
            <linearGradient id="markFade" x1="0" x2="0" y1="0" y2="1">
              <stop offset="0" stopColor="#1b1b70" stopOpacity="0.8" />
              <stop offset="1" stopColor="#1b1b70" stopOpacity="0" />
            </linearGradient>
          </defs>
          <line x1="10" x2="950" y1="1711" y2="1711" stroke="#eee" strokeWidth="1.5" />
          {rsiLines.map((l) =>
            l.segs.map((s, i) => (
              <polyline key={l.color + i} points={poly(s.map(z8))} fill="none" stroke={l.color} strokeWidth="2.4" strokeLinejoin="round" />
            )),
          )}
          <text x="14" y="1717" fontSize="26.5" fill="#999">51.64</text>
          {/* washed out watermark in the bottom right corner */}
          <rect x="787" y="1709" width="163" height="32" fill="#fff" opacity="0.9" />
          <rect x="842" y="1706" width="14" height="26" fill="url(#markFade)" />
          <rect x="882" y="1706" width="9" height="26" fill="url(#markFade)" />
        </PlotSvg>
      </SubPanel>
    </Page>
  );
};

export default App;
